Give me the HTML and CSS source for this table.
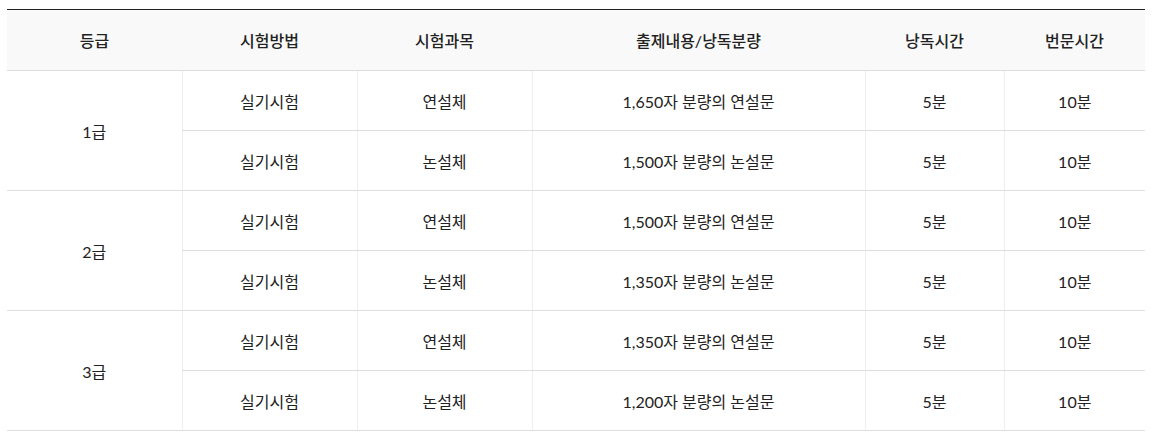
FILE: index.html
```html
<!DOCTYPE html>
<html lang="ko">
<head>
<meta charset="utf-8">
<link rel="stylesheet" href="styles.css">
</head>
<body>
<div class="wrap">
<table class="grade-table">
  <colgroup>
    <col class="c1"><col class="c2"><col class="c3"><col class="c4"><col class="c5"><col class="c6">
  </colgroup>
  <thead>
    <tr>
      <th>등급</th><th>시험방법</th><th>시험과목</th><th>출제내용/낭독분량</th><th>낭독시간</th><th>번문시간</th>
    </tr>
  </thead>
  <tbody>
    <tr class="grp-top"><td rowspan="2" class="grade">1급</td><td class="first">실기시험</td><td>연설체</td><td>1,650자 분량의 연설문</td><td>5분</td><td>10분</td></tr>
    <tr><td class="first">실기시험</td><td>논설체</td><td>1,500자 분량의 논설문</td><td>5분</td><td>10분</td></tr>
    <tr class="grp-top"><td rowspan="2" class="grade">2급</td><td class="first">실기시험</td><td>연설체</td><td>1,500자 분량의 연설문</td><td>5분</td><td>10분</td></tr>
    <tr><td class="first">실기시험</td><td>논설체</td><td>1,350자 분량의 논설문</td><td>5분</td><td>10분</td></tr>
    <tr class="grp-top"><td rowspan="2" class="grade">3급</td><td class="first">실기시험</td><td>연설체</td><td>1,350자 분량의 연설문</td><td>5분</td><td>10분</td></tr>
    <tr><td class="first">실기시험</td><td>논설체</td><td>1,200자 분량의 논설문</td><td>5분</td><td>10분</td></tr>
  </tbody>
</table>
</div>
</body>
</html>
```

FILE: styles.css
```css
html, body {
  margin: 0;
  padding: 0;
  background: #fff;
}
.wrap {
  padding: 9px 9px 0 7px;
}
.grade-table {
  width: 1138px;
  border-collapse: collapse;
  table-layout: fixed;
  font-family: "Lato", "Noto Sans CJK KR", sans-serif;
  font-size: 16px;
  color: #222;
  border-top: 1px solid #222;
}
.c1, .c2, .c3 { width: 175px; }
.c4 { width: 333px; }
.c5 { width: 139px; }
.c6 { width: 141px; }
.grade-table th {
  background: #f9f9f9;
  height: 60px;
  padding: 0;
  font-weight: 500;
  text-align: center;
  border-bottom: 1px solid #dddddd;
}
.grade-table td {
  height: 59px;
  padding: 0;
  text-align: center;
  border-bottom: 1px solid #dddddd;
  border-left: 1px solid #eeeeee;
}
.grade-table td.grade {
  border-left: none;
}
```
